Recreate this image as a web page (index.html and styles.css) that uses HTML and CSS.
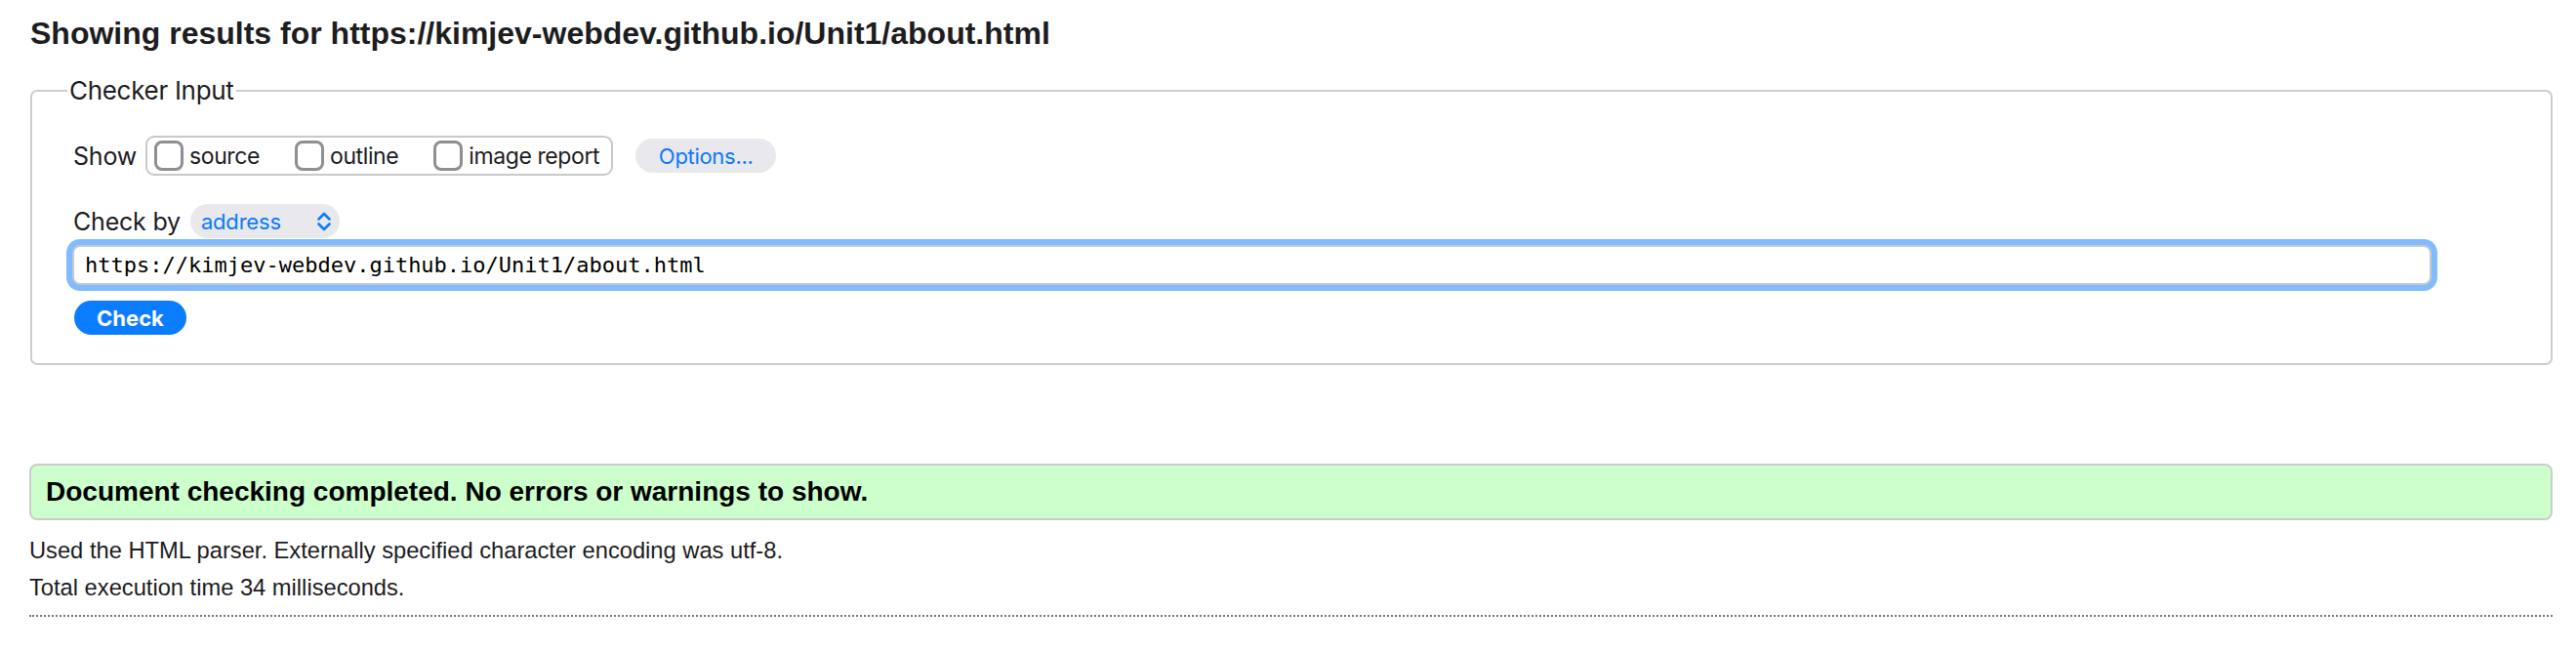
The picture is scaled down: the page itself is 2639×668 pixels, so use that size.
FILE: index.html
```html
<!DOCTYPE html>
<html lang="en">
<head>
<meta charset="utf-8">
<title>Showing results for https://kimjev-webdev.github.io/Unit1/about.html</title>
<link rel="stylesheet" href="styles.css">
</head>
<body>
<h2 class="title">Showing results for https://kimjev-webdev.github.io/Unit1/about.html</h2>
<fieldset class="checker">
  <legend class="checker-legend">Checker Input</legend>
  <div class="row row-show">
    <span class="row-label">Show</span>
    <div class="opts-group">
      <label class="opt"><input type="checkbox" class="cbox">source</label>
      <label class="opt"><input type="checkbox" class="cbox">outline</label>
      <label class="opt"><input type="checkbox" class="cbox">image report</label>
    </div>
    <button class="btn-options" type="button">Options...</button>
  </div>
  <div class="row row-by">
    <span class="row-label">Check by</span>
    <div class="select">
      <span class="select-text">address</span>
      <svg class="chev" width="16" height="24" viewBox="0 0 16 24"><path d="M2.5 9.5 L8 4 L13.5 9.5 M2.5 14.5 L8 20 L13.5 14.5" fill="none" stroke="#0a7aff" stroke-width="2.6" stroke-linecap="round" stroke-linejoin="round"/></svg>
    </div>
  </div>
  <input class="url" type="text" value="https://kimjev-webdev.github.io/Unit1/about.html">
  <button class="btn-check" type="button">Check</button>
</fieldset>
<div class="success">Document checking completed. No errors or warnings to show.</div>
<p class="info">Used the HTML parser. Externally specified character encoding was utf-8.</p>
<p class="info">Total execution time 34 milliseconds.</p>
<hr class="dots">
</body>
</html>
```
FILE: styles.css
```css
html, body {
  margin: 0;
  background: #fff;
}
body {
  padding: 0 24px 0 30px;
  font-family: "Liberation Sans", Arial, sans-serif;
  color: #1d1d1f;
}
.title {
  margin: 14px 0 0 1px;
  font-size: 32px;
  line-height: 40px;
  font-weight: bold;
  color: #1d1d1f;
}
.checker {
  margin: 24px 0 0 1px;
  padding: 31px 42px 29px 42px;
  border: 2px solid #cdcdcd;
  border-radius: 7px;
  font-family: Inter, "Noto Sans", sans-serif;
  min-inline-size: 0;
}
.checker-legend {
  margin-left: -6px;
  padding: 0 2px;
  font-size: 26px;
  line-height: 30px;
  color: #1d1d1f;
  letter-spacing: -0.3px;
}
.row {
  display: flex;
  align-items: center;
}
.row-label {
  font-size: 25px;
  letter-spacing: -0.2px;
  color: #1d1d1f;
}
.row-show {
  height: 41px;
}
.opts-group {
  display: flex;
  align-items: center;
  height: 41px;
  box-sizing: border-box;
  margin-left: 9px;
  padding: 0 12px 0 7px;
  border: 2px solid #c9c9c9;
  border-radius: 9px;
}
.opt {
  display: flex;
  align-items: center;
  gap: 6px;
  margin-right: 36px;
  font-size: 23px;
  letter-spacing: -0.4px;
  color: #1d1d1f;
}
.opt:last-child {
  margin-right: 0;
}
.cbox {
  appearance: none;
  -webkit-appearance: none;
  margin: 0;
  width: 30px;
  height: 31px;
  box-sizing: border-box;
  border: 3px solid #8e8e93;
  border-radius: 8px;
  background: #fff;
}
.btn-options {
  margin-left: 23px;
  width: 144px;
  height: 35px;
  padding: 0;
  border: none;
  border-radius: 18px;
  background: #e9e9ed;
  color: #0a7aff;
  font-family: Inter, "Noto Sans", sans-serif;
  font-size: 22px;
  letter-spacing: -0.3px;
}
.row-by {
  margin-top: 29px;
  height: 35px;
}
.select {
  display: flex;
  align-items: center;
  justify-content: space-between;
  margin-left: 10px;
  width: 153px;
  height: 35px;
  box-sizing: border-box;
  padding: 0 8px 0 11px;
  border-radius: 18px;
  background: #e9e9ed;
}
.select-text {
  font-size: 22px;
  color: #0a7aff;
  letter-spacing: -0.2px;
}
.chev {
  display: block;
}
.url {
  display: block;
  margin: 7px 0 0 -1px;
  width: 2417px;
  height: 41px;
  box-sizing: border-box;
  padding: 0 0 0 11px;
  border: 2px solid #c8c8c8;
  border-radius: 8px;
  box-shadow: 0 0 0 6px #80bcff;
  outline: none;
  font-family: "DejaVu Sans Mono", monospace;
  font-size: 22px;
  color: #000;
  background: #fff;
}
.btn-check {
  display: block;
  margin: 16px 0 0 1px;
  width: 115px;
  height: 35px;
  padding: 0;
  border: none;
  border-radius: 18px;
  background: #0a7cff;
  color: #fff;
  font-family: Inter, "Noto Sans", sans-serif;
  font-weight: bold;
  font-size: 22px;
}
.success {
  margin-top: 101px;
  height: 58px;
  box-sizing: border-box;
  padding-left: 15px;
  border: 2px solid #cccccc;
  border-radius: 8px;
  background: #ccffcc;
  font-size: 28px;
  font-weight: bold;
  line-height: 54px;
  color: #000;
}
.info {
  margin: 0;
  font-size: 23.7px;
  line-height: 37px;
  color: #1d1d1f;
}
.success + .info {
  margin-top: 13px;
}
.info + .info {
  margin-top: 1px;
}
.dots {
  margin: 9px 0 0 0;
  height: 0;
  border: none;
  border-top: 2px dotted #777;
}
```
